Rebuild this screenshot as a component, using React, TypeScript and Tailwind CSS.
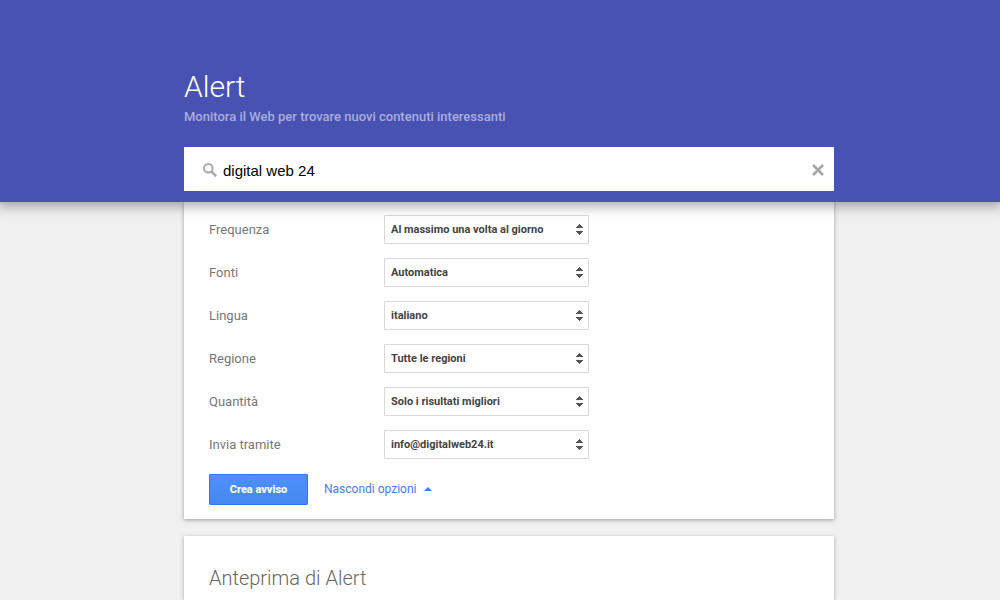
import React, { useState } from "react";

type option = {
  id: string;
  label: string;
  values: string[];
};

const options: option[] = [
  {
    id: "frequenza",
    label: "Frequenza",
    values: ["Al massimo una volta al giorno"],
  },
  { id: "fonti", label: "Fonti", values: ["Automatica"] },
  { id: "lingua", label: "Lingua", values: ["italiano"] },
  { id: "regione", label: "Regione", values: ["Tutte le regioni"] },
  { id: "quantita", label: "Quantità", values: ["Solo i risultati migliori"] },
  { id: "invia", label: "Invia tramite", values: ["info@digitalweb24.it"] },
];

const SearchIcon = () => {
  return (
    <svg width="14" height="14" viewBox="0 0 14 14" fill="none" stroke="#aaa">
      <circle cx="5.3" cy="5.3" r="4.3" strokeWidth="2" />
      <path d="M8.3 8.3L13.2 13.2" strokeWidth="2.6" />
    </svg>
  );
};

const CloseIcon = () => {
  return (
    <svg width="12" height="12" viewBox="0 0 12 12" fill="none" stroke="#a6a6a6">
      <path d="M1 1L11 11M11 1L1 11" strokeWidth="2.6" />
    </svg>
  );
};

const OptionRow = ({ optionObj }: { optionObj: option }) => {
  return (
    <div className="flex items-center">
      <label
        htmlFor={optionObj.id}
        className="w-[175px] text-[13px] text-[#777]"
      >
        {optionObj.label}
      </label>
      <div className="relative">
        <select
          id={optionObj.id}
          className="block h-[29px] w-[205px] appearance-none rounded-[1px] border border-[#d9d9d9] bg-white pl-[6px] pr-5 pt-[2px] text-[11px] font-bold text-[#444]"
        >
          {optionObj.values.map((value) => (
            <option key={value}>{value}</option>
          ))}
        </select>
        <svg
          className="pointer-events-none absolute right-[6px] top-[9px]"
          width="7"
          height="11"
          viewBox="0 0 7 11"
          fill="#555"
          shapeRendering="crispEdges"
        >
          <path d="M3 0h1v1h1v1h1v1h1v1H0V3h1V2h1V1h1zM0 7h7v1H6v1H5v1H4v1H3v-1H2V9H1V8H0z" />
        </svg>
      </div>
    </div>
  );
};

const App = () => {
  const [query, setQuery] = useState("digital web 24");
  return (
    <div className="flex min-h-screen flex-col overflow-hidden bg-[#f0f0f0] font-[Roboto,sans-serif]">
      <header className="relative z-10 bg-[#4852b2] pb-[11px] pl-[18px] pt-[69px] shadow-[0_0_12px_4px_rgba(0,0,0,0.35)]">
        <div className="mx-auto max-w-[650px]">
          <h1 className="text-[30px] font-light leading-9 text-white">Alert</h1>
          <p className="mt-1 text-[13px] font-medium leading-4 text-[#a9aedb]">
            Monitora il Web per trovare nuovi contenuti interessanti
          </p>
          <div className="mt-[22px] flex h-11 items-center bg-white pl-[19px] pr-[10px] pt-[2px]">
            <SearchIcon />
            <input
              type="text"
              aria-label="Crea un avviso"
              value={query}
              onChange={(e) => setQuery(e.target.value)}
              className="ml-[6px] mt-[2px] min-w-0 flex-1 font-['Liberation_Sans',Arial,sans-serif] text-[15px] leading-5 text-black outline-none"
            />
            <button type="button" aria-label="Cancella" onClick={() => setQuery("")}>
              <CloseIcon />
            </button>
          </div>
        </div>
      </header>

      <main className="flex flex-1 flex-col pl-[18px]">
        <div className="mx-auto flex w-full max-w-[650px] flex-1 flex-col gap-[17px]">
          <form
            onSubmit={(e) => e.preventDefault()}
            className="bg-white px-[25px] pb-[14px] pt-[13px] shadow-[0_1px_4px_rgba(0,0,0,0.35)]"
          >
            <div className="flex flex-col gap-[14px]">
              {options.map((item: option) => (
                <OptionRow key={item.id} optionObj={item} />
              ))}
            </div>
            <div className="mt-[15px] flex items-center gap-4">
              <button
                type="submit"
                className="h-[31px] w-[99px] rounded-[1px] border border-[#3079ed] bg-linear-to-b from-[#4d90fe] to-[#4787ed] pt-[2px] text-[11px] font-extrabold text-white"
              >
                Crea avviso
              </button>
              <a
                href="#opzioni"
                className="flex items-center gap-2 pb-[2px] text-[12px] text-[#427fed]"
              >
                Nascondi opzioni
                <svg width="8" height="4" viewBox="0 0 8 4" fill="#427fed">
                  <path d="M0 4L4 0L8 4z" />
                </svg>
              </a>
            </div>
          </form>

          <section className="flex-1 bg-white px-[25px] pt-7 shadow-[0_1px_4px_rgba(0,0,0,0.3)]">
            <h2 className="text-[20px] font-light leading-7 text-[#666]">
              Anteprima di Alert
            </h2>
          </section>
        </div>
      </main>
    </div>
  );
};

export default App;
